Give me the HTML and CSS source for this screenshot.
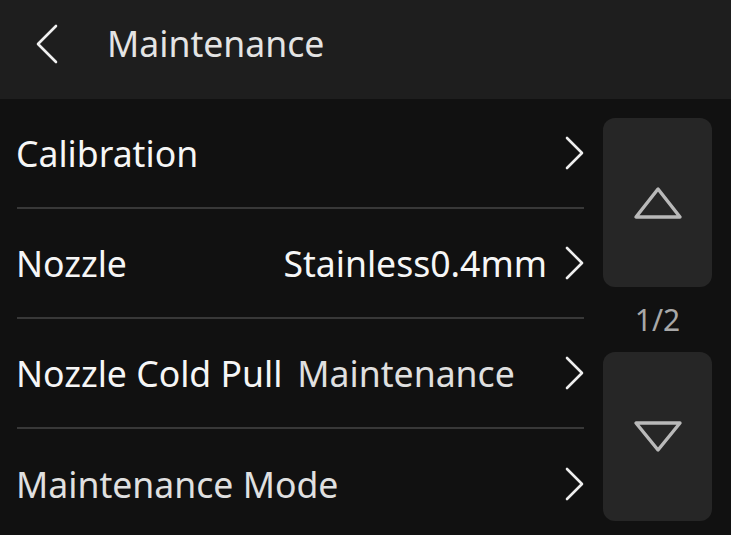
FILE: index.html
```html
<!DOCTYPE html>
<html lang="en">
<head>
<meta charset="utf-8">
<title>Maintenance</title>
<link rel="stylesheet" href="styles.css">
</head>
<body>
<div class="screen">
  <header class="topbar">
    <svg class="back" width="24" height="40" viewBox="0 0 24 40"><polyline points="20,2 2,20 20,38" /></svg>
    <h1 class="title">Maintenance</h1>
  </header>
  <main class="content">
    <ul class="list">
      <li class="row">
        <span class="label">Calibration</span>
        <span class="value"></span>
        <svg class="chev" width="20" height="34" viewBox="0 0 20 34"><polyline points="2,2 17,17 2,32" /></svg>
      </li>
      <li class="row">
        <span class="label">Nozzle</span>
        <span class="value">Stainless0.4mm</span>
        <svg class="chev" width="20" height="34" viewBox="0 0 20 34"><polyline points="2,2 17,17 2,32" /></svg>
      </li>
      <li class="row">
        <span class="label">Nozzle Cold Pull</span>
        <span class="value value-left dim">Maintenance</span>
        <svg class="chev" width="20" height="34" viewBox="0 0 20 34"><polyline points="2,2 17,17 2,32" /></svg>
      </li>
      <li class="row">
        <span class="label dim">Maintenance Mode</span>
        <span class="value"></span>
        <svg class="chev" width="20" height="34" viewBox="0 0 20 34"><polyline points="2,2 17,17 2,32" /></svg>
      </li>
    </ul>
    <aside class="pager">
      <button class="page-btn">
        <svg width="60" height="40" viewBox="0 0 60 40"><polygon points="30,6 8,34 52,34" /></svg>
      </button>
      <div class="page-num">1/2</div>
      <button class="page-btn">
        <svg width="60" height="40" viewBox="0 0 60 40"><polygon points="8,6 52,6 30,33" /></svg>
      </button>
    </aside>
  </main>
</div>
</body>
</html>
```
FILE: styles.css
```css
* { box-sizing: border-box; }
html, body {
  margin: 0;
  padding: 0;
  background: #111111;
  font-family: "Noto Sans", "Open Sans", sans-serif;
  overflow: hidden;
}
.screen {
  width: 731px;
  height: 535px;
  display: flex;
  flex-direction: column;
  background: #111111;
}
.topbar {
  height: 99px;
  flex: none;
  background: #1e1e1e;
  display: flex;
  align-items: center;
  padding-left: 36px;
  padding-bottom: 11px;
}
.back {
  fill: none;
  stroke: #f0f0f0;
  stroke-width: 2.6;
  stroke-linecap: round;
  stroke-linejoin: round;
}
.title {
  margin: 0 0 0 47px;
  font-size: 35.6px;
  font-weight: 400;
  color: #e4e4e4;
  line-height: 1;
}
.content {
  flex: 1;
  display: flex;
  min-height: 0;
}
.list {
  list-style: none;
  margin: 0;
  padding: 0 0 0 17px;
  width: 584px;
  flex: none;
}
.row {
  height: 110px;
  border-bottom: 2px solid #383838;
  display: flex;
  align-items: center;
  font-size: 35.6px;
  color: #f6f6f6;
  white-space: nowrap;
}
.row:last-child { border-bottom: none; }
.label { flex: none; margin-left: -1px; }
.value {
  flex: 1;
  text-align: right;
  padding-right: 18px;
}
.value-left {
  text-align: left;
  padding-left: 15px;
}
.dim { color: #e0e0e0; }
.chev {
  flex: none;
  margin-right: -1px;
  fill: none;
  stroke: #eeeeee;
  stroke-width: 2.6;
  stroke-linecap: round;
  stroke-linejoin: round;
}
.pager {
  flex: none;
  width: 109px;
  margin-left: 19px;
  padding-top: 19px;
  display: flex;
  flex-direction: column;
}
.page-btn {
  height: 169px;
  width: 109px;
  border: none;
  border-radius: 12px;
  background: #262626;
  padding: 0;
  display: flex;
  align-items: center;
  justify-content: center;
}
.page-btn svg {
  fill: none;
  stroke: #b9b9b9;
  stroke-width: 3.4;
  stroke-linejoin: round;
}
.page-num {
  height: 65px;
  display: flex;
  align-items: center;
  justify-content: center;
  font-size: 30px;
  color: #a8a8a8;
}
```
